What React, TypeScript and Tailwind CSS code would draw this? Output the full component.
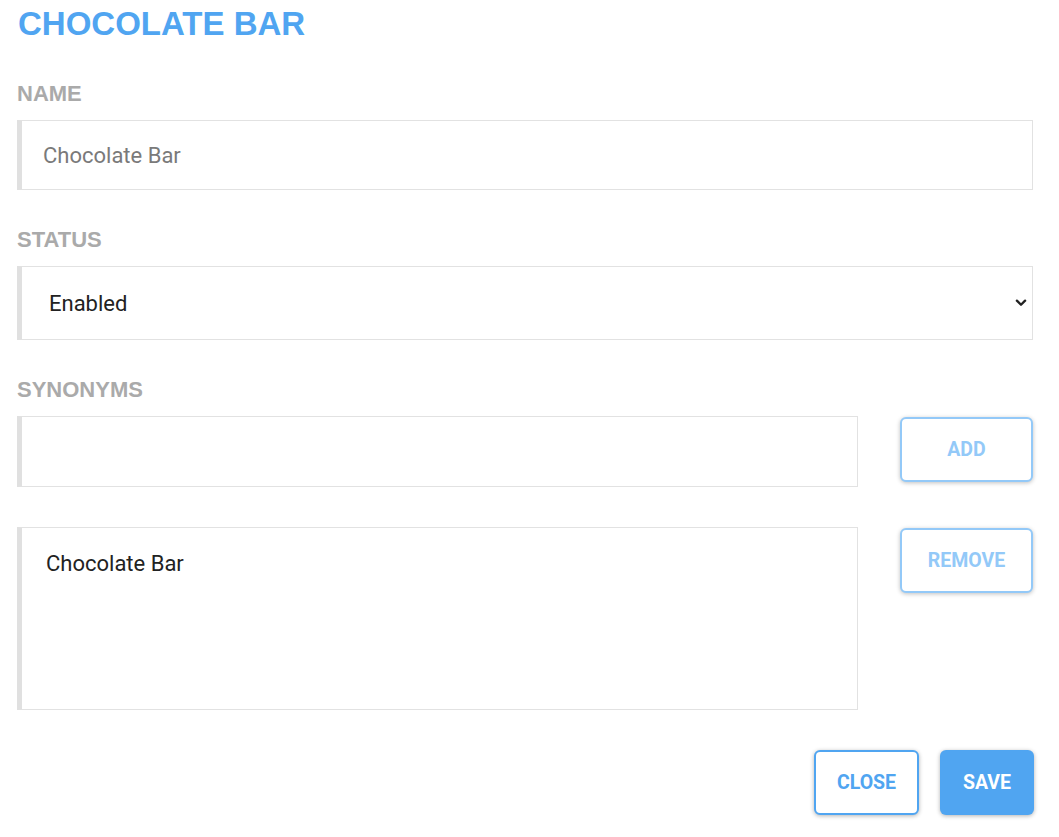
const label = "block font-['Liberation_Sans',Arial,sans-serif] text-[22px] font-bold leading-[26px] text-[#aaaaaa]";
const field =
  "bg-white border border-[#e2e2e2] border-l-[5px] border-l-[#e0e0e0] font-['Roboto',sans-serif] text-[22px] outline-none";
const ghostBtn =
  "h-[65px] w-[133px] rounded-[6px] border-2 border-[#93c9f8] bg-white font-['Roboto',sans-serif] text-[19.5px] font-bold text-[#93c9f8] shadow-[0_1px_4px_rgba(0,0,0,0.25)]";

export default function App() {
  return (
    <div className="min-h-screen bg-white pl-[17px] pr-[26px] pt-[4px]">
      <h1 className="pl-px font-['Liberation_Sans',Arial,sans-serif] text-[33px] font-bold leading-[40px] text-[#50a5f1]">
        CHOCOLATE BAR
      </h1>

      <div className="mt-[37px]">
        <label className={label}>NAME</label>
        <input
          readOnly
          value="Chocolate Bar"
          className={field + " mt-[13px] h-[70px] w-full px-[21px] text-[#7a7a7a]"}
        />
      </div>

      <div className="mt-[37px]">
        <label className={label}>STATUS</label>
        <div className={field + " mt-[13px] flex h-[74px] w-full items-center justify-between pl-[27px] pr-[4px] text-[#222]"}>
          <span>Enabled</span>
          <svg width="14" height="14" viewBox="0 0 24 24" fill="none" stroke="#222" strokeWidth="4" strokeLinecap="round" strokeLinejoin="round">
            <path d="M5 8l7 7 7-7" />
          </svg>
        </div>
      </div>

      <div className="mt-[37px]">
        <label className={label}>SYNONYMS</label>
        <div className="mt-[13px] flex items-start justify-between">
          <input className={field + " h-[71px] w-[841px] px-[21px]"} />
          <button className={ghostBtn + " mt-px"}>ADD</button>
        </div>
        <div className="mt-[40px] flex items-start justify-between">
          <div className={field + " h-[183px] w-[841px] pl-[24px] pt-[19px] text-[#222]"}>Chocolate Bar</div>
          <button className={ghostBtn + " mt-px"}>REMOVE</button>
        </div>
      </div>

      <div className="mt-[40px] flex justify-end gap-[21px]">
        <button className="h-[65px] w-[105px] rounded-[6px] border-2 border-[#50a5f1] bg-white font-['Roboto',sans-serif] text-[19.5px] font-bold text-[#50a5f1] shadow-[0_1px_4px_rgba(0,0,0,0.3)]">
          CLOSE
        </button>
        <button className="-mr-px h-[65px] w-[94px] rounded-[6px] bg-[#50a5f1] font-['Roboto',sans-serif] text-[19.5px] font-bold text-white shadow-[0_1px_4px_rgba(0,0,0,0.3)]">
          SAVE
        </button>
      </div>
    </div>
  );
}
